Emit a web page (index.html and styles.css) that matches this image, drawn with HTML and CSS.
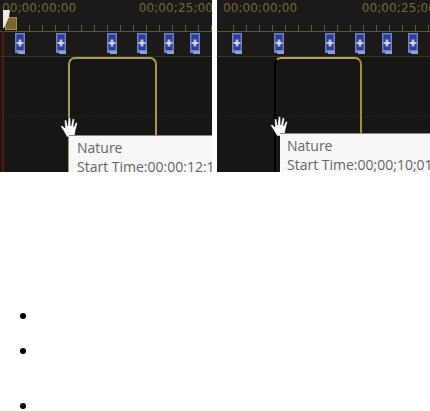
FILE: index.html
```html
<!DOCTYPE html>
<html lang="en">
<head>
    <meta charset="UTF-8">
    <meta name="viewport" content="width=device-width, initial-scale=1.0">
    <title>Timeline</title>
    <link rel="stylesheet" href="styles.css">
</head>
<body>
    <svg class="defs" width="0" height="0">
        <symbol id="clip" viewBox="0 0 10 22">
            <rect width="10" height="20" fill="#6f80c4"/>
            <rect x="1.5" y="1.5" width="7" height="15.5" fill="#2f3f8e"/>
            <rect x="3" y="18" width="7" height="3" fill="#8f9fd8"/>
            <path d="M1.5 10h7" stroke="#f4f6ff" stroke-width="1.4" fill="none"/>
            <path d="M4.2 6.5v7M5.8 6.5v7" stroke="#e8ecff" stroke-width="1.1" fill="none"/>
        </symbol>
        <symbol id="hand" viewBox="0 0 20 22">
            <path d="M7 21 L3 14 L0.5 10.5 L2 9.5 L5 12 L4.5 4 L6.5 4 L7.5 10 L8.5 1.5 L10.5 1.5 L10.8 10 L12.5 2.5 L14.5 3 L13.5 11 L16 6 L17.5 7 L15.5 15 L14.5 21 Z" fill="#fff" stroke="#111" stroke-width="0.5"/>
        </symbol>
    </svg>

    <div class="shots">
        <div class="shot shot-left">
            <div class="ruler">
                <span>00;00;00;00</span>
                <span>00;00;25;00</span>
                <svg class="marker" viewBox="0 0 14 20">
                    <rect x="2.5" y="7.5" width="11" height="12" fill="#7a6530" stroke="#a08c50"/>
                    <path d="M0 0H7L6 7L1 18H0Z" fill="#efeadb"/>
                </svg>
            </div>
            <div class="track">
                <svg class="clip c1"><use href="#clip"/></svg>
                <svg class="clip c2"><use href="#clip"/></svg>
                <svg class="clip c3"><use href="#clip"/></svg>
                <svg class="clip c4"><use href="#clip"/></svg>
                <svg class="clip c5"><use href="#clip"/></svg>
                <svg class="clip c6"><use href="#clip"/></svg>
            </div>
            <div class="lane">
                <div class="playhead"></div>
                <div class="box"></div>
                <svg class="hand"><use href="#hand"/></svg>
                <div class="tip">
                    <div>Nature</div>
                    <div>Start Time:00;00;12;1</div>
                </div>
            </div>
        </div>
        <div class="shot shot-right">
            <div class="ruler">
                <span>00;00;00;00</span>
                <span>00;00;25;00</span>
            </div>
            <div class="track">
                <svg class="clip c1"><use href="#clip"/></svg>
                <svg class="clip c2"><use href="#clip"/></svg>
                <svg class="clip c3"><use href="#clip"/></svg>
                <svg class="clip c4"><use href="#clip"/></svg>
                <svg class="clip c5"><use href="#clip"/></svg>
                <svg class="clip c6"><use href="#clip"/></svg>
            </div>
            <div class="lane">
                <div class="box"></div>
                <svg class="hand"><use href="#hand"/></svg>
                <div class="tip">
                    <div>Nature</div>
                    <div>Start Time:00;00;10;01</div>
                </div>
            </div>
        </div>
    </div>

    <ul class="dots">
        <li></li>
        <li></li>
        <li></li>
    </ul>
</body>
</html>
```

FILE: styles.css
```css
body {
    margin: 0;
    background-color: #fff;
    font-family: "Open Sans", sans-serif;
}
.defs {
    position: absolute;
}
.shots {
    display: flex;
    gap: 5px;
    height: 172px;
}
.shot {
    position: relative;
    flex: 0 0 212px;
    display: flex;
    flex-direction: column;
    overflow: hidden;
    background-color: #1b1a18;
}
.shot-right {
    flex-basis: 213px;
}
.ruler {
    position: relative;
    height: 31px;
    flex: none;
    display: flex;
    justify-content: space-between;
    padding: 0 0 0 2px;
    border-bottom: 1px solid #5f5338;
    background-image: repeating-linear-gradient(90deg, transparent 0 12px, #5e5845 12px 13px);
    background-size: 100% 6px;
    background-position: 4px bottom;
    background-repeat: no-repeat;
    font-family: "DejaVu Sans", sans-serif;
    font-size: 12px;
    line-height: 17px;
    letter-spacing: 0.1px;
    color: #75663a;
    white-space: nowrap;
}
.shot-left .ruler span:last-of-type {
    margin-right: -1px;
}
.shot-right .ruler {
    padding-left: 6px;
}
.shot-right .ruler span:last-of-type {
    margin-right: -6px;
}
.marker {
    position: absolute;
    left: 3px;
    top: 10px;
    width: 14px;
    height: 20px;
}
.track {
    position: relative;
    height: 24px;
    flex: none;
    border-bottom: 1px solid #38352b;
}
.clip {
    position: absolute;
    top: 1px;
    width: 10px;
    height: 22px;
}
.c1 { left: 15px; }
.c2 { left: 56px; }
.c3 { left: 107px; }
.c4 { left: 137px; }
.c5 { left: 164px; }
.c6 { left: 190px; }
.shot-right .c2 { left: 57px; }
.shot-right .c3 { left: 108px; }
.shot-right .c4 { left: 138px; }
.shot-right .c5 { left: 165px; }
.shot-right .c6 { left: 191px; }
.lane {
    position: relative;
    flex: 1;
    background-color: #171614;
    background-image: linear-gradient(90deg, #2c2a25 50%, transparent 50%);
    background-size: 3px 1px;
    background-position: 0 59px;
    background-repeat: repeat-x;
}
.playhead {
    position: absolute;
    left: 2px;
    top: -26px;
    bottom: 0;
    width: 2px;
    background-color: #5c1414;
}
.box {
    position: absolute;
    left: 68px;
    top: 0;
    width: 85px;
    height: 130px;
    border: 2px solid #a8995f;
    border-bottom: none;
    border-radius: 7px 7px 0 0;
}
.shot-right .box {
    left: 57px;
    width: 84px;
    border-left-color: #000;
    border-top-color: #b5a162;
    border-right-color: #a58a45;
}
.hand {
    position: absolute;
    left: 60px;
    top: 59px;
    width: 20px;
    height: 22px;
}
.shot-right .hand {
    left: 53px;
    top: 58px;
}
.tip {
    position: absolute;
    left: 69px;
    top: 78px;
    right: 0;
    bottom: 0;
    padding: 2px 0 0 8px;
    border-top: 1px solid #8a8a8a;
    background-color: #f7f7f7;
    font-size: 14px;
    line-height: 19px;
    color: #666;
    white-space: nowrap;
}
.shot-right .tip {
    left: 63px;
    top: 76px;
    padding-left: 7px;
}
.dots {
    list-style: none;
    margin: 141px 0 0;
    padding: 0 0 0 20px;
}
.dots li {
    width: 6px;
    height: 6px;
    border-radius: 50%;
    background-color: #000;
    margin-bottom: 29px;
}
.dots li:nth-child(2) {
    margin-bottom: 49px;
}
.dots li:last-child {
    margin-bottom: 0;
}
```
